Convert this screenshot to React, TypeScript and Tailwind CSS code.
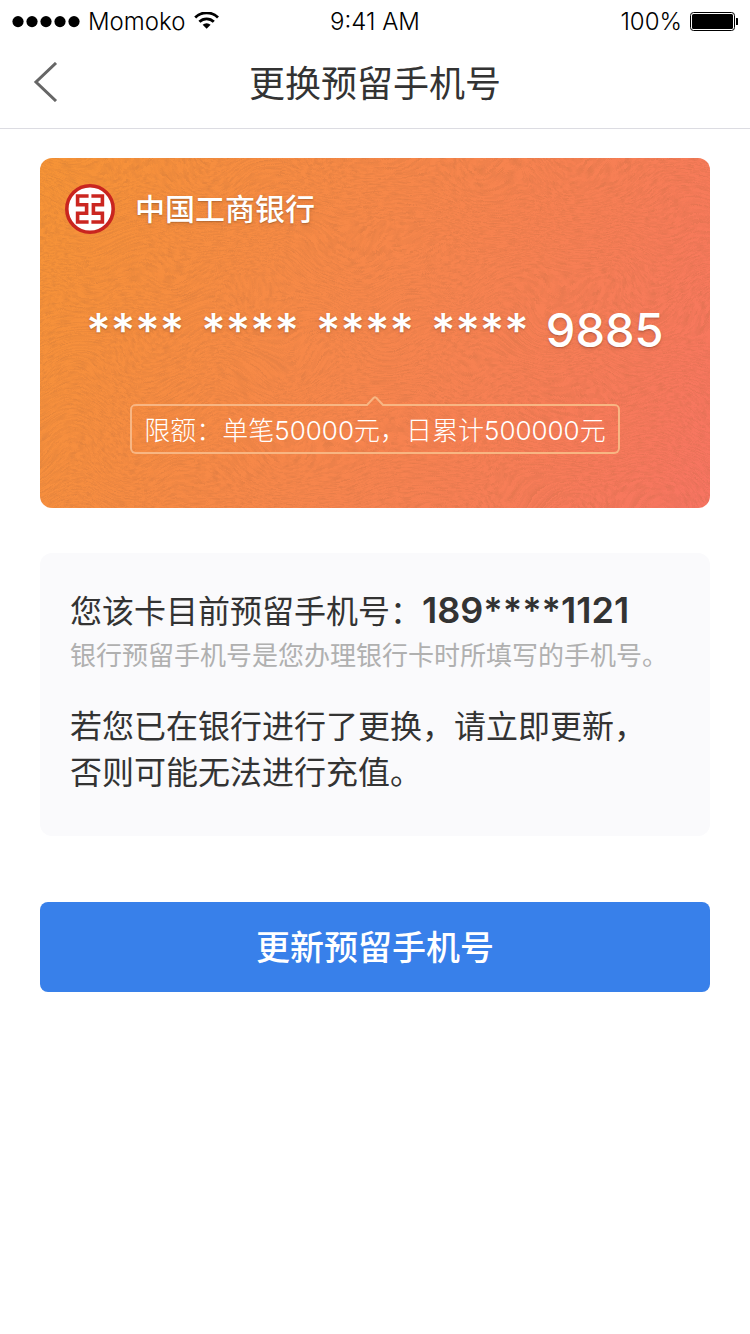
import React from 'react';

const CARD_GROUPS = ['****', '****', '****', '****', '9885'];
const PHONE = '189****1121';

const StatusBar: React.FC = () => (
  <div className="grid h-10 grid-cols-3 items-center pt-1 text-2xl text-black">
    <div className="flex items-center gap-2 pl-3">
      <svg className="h-3 w-17 shrink-0" viewBox="0 0 68 12" aria-hidden="true">
        {[6, 20, 34, 48, 62].map(cx => <circle key={cx} cx={cx} cy="5.6" r="5.6" />)}
      </svg>
      <span className="font-light">Momoko</span>
      <svg className="h-5 w-7 shrink-0" viewBox="0 0 28 20" fill="none" stroke="#000" strokeWidth="2.8" aria-hidden="true">
        <path d="M2.2 5.4 A16.5 16.5 0 0 1 25 5.4" />
        <path d="M6.4 9.8 A10.2 10.2 0 0 1 20.8 9.8" />
        <path d="M9.6 12.8 A5.8 5.8 0 0 1 17.6 12.8 L13.6 16.8 Z" fill="#000" stroke="none" />
      </svg>
    </div>
    <span className="text-center font-light">9:41 AM</span>
    <div className="flex items-center justify-end gap-2 pr-3">
      <span className="font-light">100%</span>
      <svg className="h-5 w-12 shrink-0" viewBox="0 0 48 20" aria-hidden="true">
        <rect x="0.5" y="0.5" width="44" height="18" rx="3" fill="none" stroke="#000" />
        <rect x="2" y="2" width="41" height="15" rx="1.5" />
        <path d="M46 6 h1 q1.5 0 1.5 1.5 v4 q0 1.5 -1.5 1.5 h-1 z" />
      </svg>
    </div>
  </div>
);

const BankLogo: React.FC = () => (
  <svg className="size-[50px] shrink-0" viewBox="0 0 50 50" aria-hidden="true">
    <circle cx="25" cy="25" r="23.2" fill="#fff" stroke="#c9251f" strokeWidth="3.6" />
    <g fill="none" stroke="#cb2620" strokeWidth="3.6">
      <path d="M23.6 12 H12.6 V20.8 H21.6 V29.2 H12.6 V38 H23.6" />
      <path d="M26.4 12 H37.4 V20.8 H28.4 V29.2 H37.4 V38 H26.4" />
    </g>
  </svg>
);

// Fine fur-like grain laid over the card gradient
const CardTexture: React.FC = () => (
  <svg className="absolute inset-0 size-full opacity-20" aria-hidden="true">
    <filter id="grain" x="-10%" y="-10%" width="120%" height="120%" colorInterpolationFilters="sRGB">
      <feTurbulence type="fractalNoise" baseFrequency="0.12 0.55" numOctaves="3" seed="8" result="fibre" />
      <feTurbulence type="fractalNoise" baseFrequency="0.014" numOctaves="1" seed="3" result="bend" />
      <feDisplacementMap in="fibre" in2="bend" scale="90" xChannelSelector="R" yChannelSelector="G" />
      <feColorMatrix values="0 0 0 0 0.65  0 0 0 0 0.38  0 0 0 0 0.22  2.4 0 0 0 -0.9" />
    </filter>
    <rect width="100%" height="100%" filter="url(#grain)" />
  </svg>
);

const LimitTip: React.FC = () => (
  <div className="relative flex h-[50px] items-center rounded-md border-2 border-t-0 border-[#f8b683] px-3 pt-1 text-[26px]">
    <div className="absolute -inset-x-0.5 top-0 flex h-2">
      <div className="flex-1 rounded-tl-md border-t-2 border-[#f8b683]" />
      <svg className="-mt-2 h-2.5 w-5" viewBox="0 0 20 10" fill="none" stroke="#f8b683" strokeWidth="2" aria-hidden="true">
        <path d="M0 9 H2 L8.5 2 Q10 0.6 11.5 2 L18 9 H20" />
      </svg>
      <div className="flex-1 rounded-tr-md border-t-2 border-[#f8b683]" />
    </div>
    <span className="font-light whitespace-nowrap">限额：单笔50000元，日累计500000元</span>
  </div>
);

const BankCard: React.FC = () => (
  <section className="relative flex h-[350px] flex-col overflow-hidden rounded-xl bg-linear-[115deg] from-[#f69436] via-[#f7864c] to-[#f77462] text-white">
    <CardTexture />
    <div className="relative flex items-center gap-5 px-[25px] pt-[26px]">
      <BankLogo />
      <h2 className="text-[30px] font-medium text-shadow-md">中国工商银行</h2>
    </div>
    <p className="relative mt-[72px] flex justify-center gap-[17px] text-[47px] leading-12 font-medium whitespace-nowrap text-shadow-md">
      {CARD_GROUPS.map((group, i) => <span key={i}>{group}</span>)}
    </p>
    <div className="relative mt-[50px] flex justify-center">
      <LimitTip />
    </div>
  </section>
);

const App: React.FC = () => {
  return (
    <div lang="zh-CN" className="min-h-screen bg-white font-['Inter','Noto_Sans_CJK_SC',sans-serif] text-[#333333]">
      <StatusBar />
      <header className="grid h-[89px] grid-cols-[1fr_auto_1fr] items-center border-b border-[#dcdce2] px-8">
        <button type="button" aria-label="返回" className="w-8 pb-1">
          <svg className="h-10 w-7" viewBox="0 0 28 40" fill="none" stroke="#666" strokeWidth="3" aria-hidden="true">
            <path d="M24 1 L4 20 L24 39" />
          </svg>
        </button>
        <h1 className="text-4xl font-normal">更换预留手机号</h1>
      </header>

      <main className="px-10 pt-[29px]">
        <BankCard />

        <section className="mt-[45px] rounded-xl bg-[#fafafc] px-[30px] pt-[35px] pb-10">
          <p className="flex items-baseline text-[32px] leading-12 whitespace-nowrap">
            您该卡目前预留手机号：
            <strong className="text-4xl leading-10 font-semibold">{PHONE}</strong>
          </p>
          <p className="text-[26px] leading-10 text-[#b0b0b0]">银行预留手机号是您办理银行卡时所填写的手机号。</p>
          <p className="mt-7 text-[32px] leading-[46px]">
            若您已在银行进行了更换，请立即更新，
            <br />
            否则可能无法进行充值。
          </p>
        </section>

        <button type="button" className="mt-[66px] h-[90px] w-full rounded-lg bg-[#3880ea] text-[34px] font-medium text-white">
          更新预留手机号
        </button>
      </main>
    </div>
  );
};

export default App;
